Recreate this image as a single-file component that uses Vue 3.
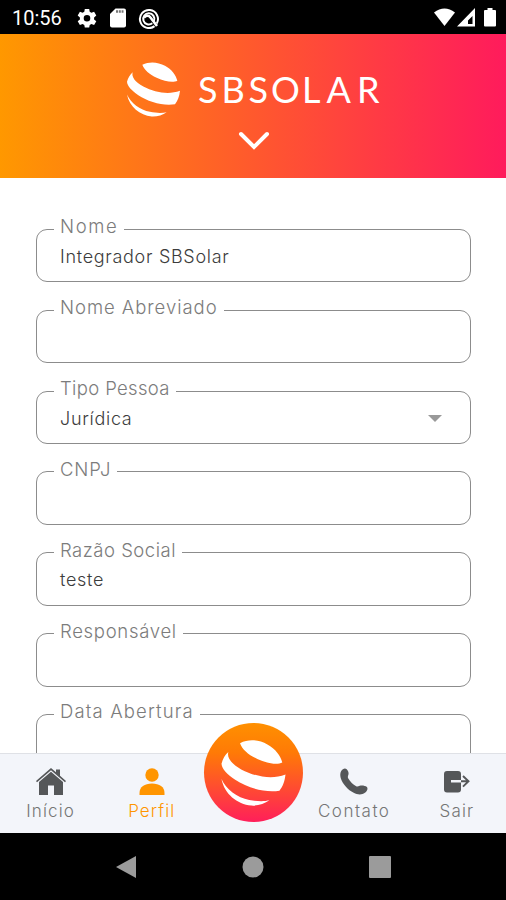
<template>
  <div class="screen">
    <div class="status-bar">
      <span class="clock">10:56</span>
      <svg class="status-left" width="84" height="22" viewBox="0 0 84 22" fill="#fff">
        <path fill-rule="evenodd" d="M7.800 2h4.400l.5 2.800 1.700 1 2.700-1 2.200 3.800-2.200 1.800v2l2.200 1.800-2.200 3.800-2.700-1-1.700 1-.5 2.500H7.800l-.5-2.500-1.700-1-2.700 1-2.200-3.800 2.200-1.800v-2L.7 8.600l2.200-3.800 2.700 1 1.700-1zM10 7.900a3.300 3.300 0 1 0 0 6.600 3.300 3.300 0 0 0 0-6.600z" />
        <path d="M38.500 1.500H47q2 0 2 2v15q0 2-2 2H35q-2 0-2-2V7z" />
        <path d="M39 4.500h7.500" stroke="#777" stroke-width="2.500" stroke-dasharray="2 .8" />
        <g fill="none" stroke="#fff" stroke-width="2">
          <path d="M77.500 19.100a9 9 0 1 1 2.300-2.700" />
          <path d="M75.300 16.300a5.600 5.600 0 1 1 1.700-2.300" />
          <path d="M67 10.500q4-3.500 6.500 0L80 19" stroke-width="2.600" />
        </g>
      </svg>
      <svg class="status-right" width="63" height="20" viewBox="0 0 63 20" fill="#fff">
        <path d="M0 4.500Q10.500-3.500 21 4.500L10.500 18z" />
        <path fill-rule="evenodd" d="M41 0v18.500H23zM38.500 8v8h-4.500V12.500z" />
        <path d="M53.500 0h5v2H61q1 0 1 1v14.500q0 1-1 1H51q-1 0-1-1V3q0-1 1-1h2.500z" />
      </svg>
    </div>

    <header class="header">
      <div class="brand">
        <svg class="brand-mark" viewBox="51 36 159 164" fill="#fff">
          <path v-for="d in globe" :key="d" :d="d" />
        </svg>
        <svg class="brand-name" width="210" height="48" viewBox="0 0 210 48">
          <text x="0 23.500 50.500 73 104 128.500 159" y="36.500">SBSOLAR</text>
        </svg>
      </div>
      <svg class="chevron" width="32" height="20" viewBox="0 0 32 20">
        <path d="M3 3l13 13L29 3" fill="none" stroke="#fff" stroke-width="4" stroke-linecap="round" />
      </svg>
    </header>

    <main class="form">
      <fieldset v-for="field in fields" :key="field.label" class="field">
        <legend :style="{ letterSpacing: field.spacing + 'px' }">{{ field.label }}</legend>
        <div class="field-row">
          <span class="value">{{ field.value }}</span>
          <svg v-if="field.select" class="caret" width="14" height="7" viewBox="0 0 14 7">
            <path d="M0 0h14L7 7z" fill="#999" />
          </svg>
        </div>
      </fieldset>
    </main>

    <nav class="tabs">
      <a class="tab">
        <svg width="30" height="28" viewBox="0 0 30 28" fill="#555759">
          <path d="M15 0l5 4.200V1.500h4v6.200l6 5.300-1 1.200L15 2.200 1 14.200 0 13z" />
          <path d="M15 3.700l12 10.400V27h-9v-9.500h-6V27H3V14.100z" />
        </svg>
        <span>Início</span>
      </a>
      <a class="tab active">
        <svg width="26" height="28" viewBox="0 0 26 28" fill="#ff9500">
          <circle cx="13" cy="7" r="6.700" />
          <path d="M.5 27v-2c0-6 5-9.500 12.500-9.500S25.500 19 25.500 25v2z" />
        </svg>
        <span>Perfil</span>
      </a>
      <div class="home-badge">
        <svg viewBox="51 36 159 164" fill="#fff">
          <path v-for="d in globe" :key="d" :d="d" />
        </svg>
      </div>
      <a class="tab contact">
        <svg width="28" height="28" viewBox="0 0 28 28" fill="#555759">
          <path d="M1.200 3C2.700.8 5-.2 6.700 1.200c1.600 1.500 2.300 4 1.600 5.800C7.800 8.500 7.600 9.300 8.300 10.500c1.900 3.300 4.700 6 7.900 7.800 1.300.7 2.200 0 3.500-.5 2-.6 5.500-.3 7.200 1.300 1.300 1.500.3 4-2 5.700-3 2.300-7.500 2-11.200 0C8 22 2.500 16 .7 10 0 7.300.1 4.900 1.200 3z" />
        </svg>
        <span>Contato</span>
      </a>
      <a class="tab exit">
        <svg width="26" height="28" viewBox="0 0 26 28">
          <path d="M3 3h11q3 0 3 3v6H7v2.600h10v7q0 3-3 3H3q-3 0-3-3V6q0-3 3-3z" fill="#555759" />
          <path d="M17 13.300h7.500M19 8l5.500 5.300L19 18.600" fill="none" stroke="#555759" stroke-width="1.900" />
        </svg>
        <span>Sair</span>
      </a>
    </nav>

    <div class="system-nav">
      <svg width="22" height="24" viewBox="0 0 22 24"><path d="M21 1v22L1 12z" /></svg>
      <svg width="22" height="22" viewBox="0 0 22 22"><circle cx="11" cy="11" r="10.500" /></svg>
      <svg width="22" height="22" viewBox="0 0 22 22"><rect width="22" height="22" rx="1" /></svg>
    </div>
  </div>
</template>

<script setup>
import { ref } from 'vue'

// three bands of the globe, shared by the header and the bottom badge
const globe = [
  'M97 44C120 32 145 36 165 47C185 58 198 75 202 92C190 98 165 95 140 83C118 73 103 60 97 44Z',
  'M68 66C64 80 75 95 100 109C135 127 175 135 210 122C208 140 203 152 195 162C160 168 115 155 85 135C65 122 52 108 51 95C54 83 60 73 68 66Z',
  'M51 133C62 158 90 180 120 185C140 189 158 189 170 186C158 195 140 200 125 199C90 196 58 170 51 133Z'
]

const fields = ref([
  { label: 'Nome', value: 'Integrador SBSolar', spacing: 1.6 },
  { label: 'Nome Abreviado', value: '', spacing: 0.95 },
  { label: 'Tipo Pessoa', value: 'Jurídica', spacing: 0.35, select: true },
  { label: 'CNPJ', value: '', spacing: 0.9 },
  { label: 'Razão Social', value: 'teste', spacing: 0.5 },
  { label: 'Responsável', value: '', spacing: 0.7 },
  { label: 'Data Abertura', value: '', spacing: 1.15 }
])
</script>

<style>
body {
  margin: 0;
}
</style>

<style scoped>
.screen {
  width: 506px;
  height: 900px;
  display: flex;
  flex-direction: column;
  overflow: hidden;
  background: #fff;
  font-family: Inter, 'Liberation Sans', sans-serif;
}

.status-bar {
  flex: none;
  height: 34px;
  box-sizing: border-box;
  padding: 0 9px 0 12px;
  display: flex;
  align-items: center;
  background: #000;
}

.clock {
  width: 65px;
  color: #fff;
  font-family: Roboto, sans-serif;
  font-size: 20px;
  line-height: 34px;
  padding-top: 2px;
}

.status-left {
  margin-top: 1px;
}

.status-right {
  margin: 2px 0 0 auto;
}

.header {
  flex: none;
  height: 144px;
  display: flex;
  flex-direction: column;
  align-items: center;
  background: linear-gradient(90deg, #ff9800 0%, #ff592d 50%, #ff1b5c 100%);
}

.brand {
  width: 506px;
  box-sizing: border-box;
  padding: 28px 0 0 127px;
  display: flex;
}

.brand-mark {
  width: 53px;
  height: 55px;
}

.brand-name {
  margin: 4px 0 0 18px;
}

.brand-name text {
  font-family: Lato, sans-serif;
  font-size: 36px;
  font-weight: 400;
  fill: #fff;
}

.chevron {
  margin: 14px 0 0 1px;
}

.form {
  flex: 1;
  min-height: 0;
  overflow: hidden;
  padding: 38.400px 35px 0 36px;
}

.field {
  box-sizing: border-box;
  height: 66px;
  min-width: 0;
  margin: 0 0 14.850px;
  padding: 0 28px 0 17px;
  border: 1px solid #8c8c8c;
  border-radius: 11px;
}

.field legend {
  padding: 0 6px 6px;
  font-size: 18.500px;
  font-weight: 300;
  line-height: 20px;
  color: #7c7c7c;
}

.field-row {
  display: flex;
  align-items: center;
  justify-content: space-between;
  height: 20px;
  margin-top: 4px;
  padding-left: 6px;
}

.value {
  font-size: 18px;
  font-weight: 300;
  letter-spacing: 0.7px;
  color: #3c3c3c;
}

.tabs {
  flex: none;
  height: 80px;
  box-sizing: border-box;
  border-top: 1px solid #dfe1e6;
  display: grid;
  grid-template-columns: repeat(5, 1fr);
  background: #f3f5fa;
}

.tab {
  display: flex;
  flex-direction: column;
  align-items: center;
  padding-top: 14px;
  font-size: 17px;
  font-weight: 300;
  line-height: 20px;
  letter-spacing: 1.1px;
  color: #757575;
}

.tab span {
  margin-top: 5px;
}

.tab.active {
  color: #ff9500;
}

.tab.contact {
  letter-spacing: 1.500px;
}

.tab.exit {
  padding-left: 3px;
}

/* round button rises above the tab bar */
.home-badge {
  width: 99px;
  height: 99px;
  margin: -31px -1px 0 1px;
  justify-self: center;
  position: relative;
  border-radius: 50%;
  display: flex;
  align-items: center;
  justify-content: center;
  background: linear-gradient(180deg, #ff9000 0%, #ff7a06 30%, #ff1f5a 100%);
}

.home-badge svg {
  width: 65px;
  height: 66px;
}

.system-nav {
  flex: none;
  height: 67px;
  box-sizing: border-box;
  padding: 0 115px;
  display: flex;
  align-items: center;
  justify-content: space-between;
  background: #000;
}

.system-nav svg {
  fill: #9b9b9b;
}
</style>
